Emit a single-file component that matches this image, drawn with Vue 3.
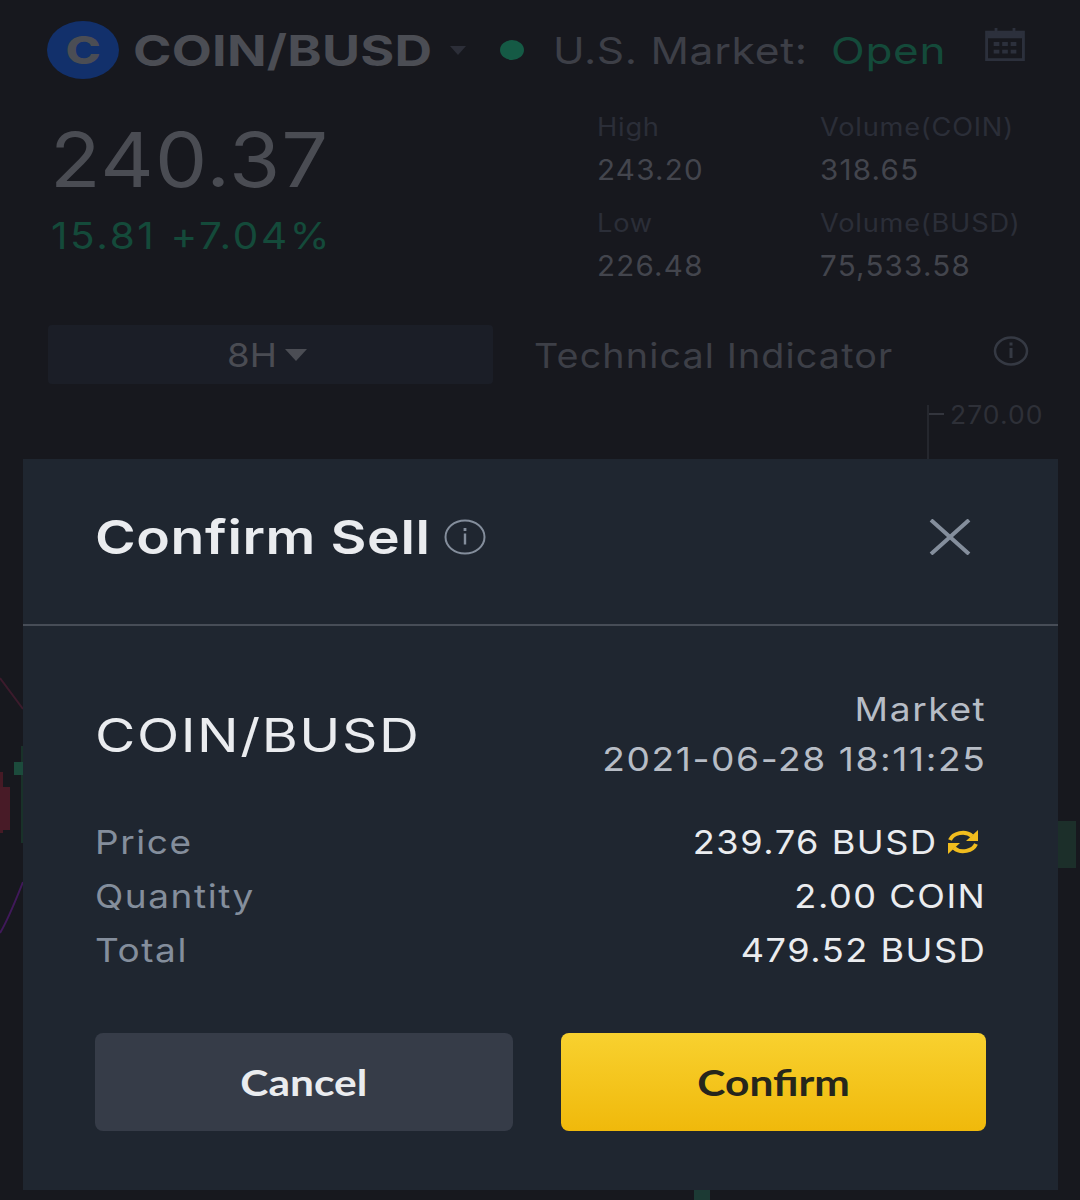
<script setup>
const stats = [
  { label: 'High', value: '243.20', key: 'Volume(COIN)', amount: '318.65' },
  { label: 'Low', value: '226.48', key: 'Volume(BUSD)', amount: '75,533.58' },
]
</script>

<template>
  <div class="page">
    <header class="top">
      <div class="logo"><span>C</span></div>
      <h1 class="pair">COIN/BUSD</h1>
      <i class="caret small"></i>
      <i class="dot"></i>
      <span class="market">U.S. Market:</span>
      <span class="open">Open</span>
      <svg class="cal" width="40" height="34" viewBox="0 0 42 36">
        <path d="M1.5 5.5h39v29h-39z" fill="none" stroke="#2c303c" stroke-width="3" />
        <path d="M2 6h38v6H2zM10 1h3v6h-3zM29 1h3v6h-3z" fill="#2c303c" />
        <path d="M9 16h6v4H9zM18 16h6v4h-6zM27 16h6v4h-6zM9 24h6v4H9zM18 24h6v4h-6zM27 24h6v4h-6z" fill="#2c303c" />
      </svg>
    </header>

    <section class="summary">
      <div class="price">
        <div class="last">240.37</div>
        <div class="change">15.81 +7.04%</div>
      </div>
      <div class="stats">
        <template v-for="s in stats" :key="s.label">
          <div class="stat">
            <div class="stat-label">{{ s.label }}</div>
            <div class="stat-value">{{ s.value }}</div>
          </div>
          <div class="stat">
            <div class="stat-label">{{ s.key }}</div>
            <div class="stat-value">{{ s.amount }}</div>
          </div>
        </template>
      </div>
    </section>

    <section class="tools">
      <div class="interval"><span>8H</span><i class="caret"></i></div>
      <span class="indicator">Technical Indicator</span>
      <svg class="tool-info" width="36" height="30" viewBox="0 0 36 30">
        <ellipse cx="18" cy="15" rx="16" ry="13.5" fill="none" stroke="#353943" stroke-width="2.5" />
        <path d="M16.5 6.5h3v3h-3zM16.5 12h3v10h-3z" fill="#353943" />
      </svg>
    </section>

    <div class="chart">
      <i class="axis"></i>
      <i class="tick"></i>
      <span class="axis-price">270.00</span>
      <svg class="lines" width="24" height="300" viewBox="0 0 24 300">
        <path d="M0 28L23 59" stroke="#3c1b2c" stroke-width="2" fill="none" />
        <path d="M0 283C8 270 15 252 23 232" stroke="#40195a" stroke-width="2" fill="none" />
        <path d="M21 96h2v97h-2z" fill="#193229" />
        <path d="M14 112h9v13h-9z" fill="#1c4b3c" />
        <path d="M0 122h3v61H0z" fill="#451a25" />
        <path d="M0 137h10v43H0z" fill="#481b27" />
      </svg>
      <i class="side-candle"></i>
      <i class="bottom-candle"></i>
    </div>

    <div class="modal">
      <div class="modal-head">
        <h2>Confirm Sell</h2>
        <svg class="head-info" width="42" height="36" viewBox="0 0 42 36">
          <ellipse cx="21" cy="18" rx="19.5" ry="16.5" fill="none" stroke="#848e9c" stroke-width="2" />
          <path d="M19.6 9h2.8v3h-2.8zM19.8 14.5h2.4v11h-2.4z" fill="#848e9c" />
        </svg>
        <svg class="close" width="42" height="36" viewBox="0 0 42 36">
          <path d="M2 1l38 34M40 1L2 35" stroke="#848e9c" stroke-width="4" fill="none" />
        </svg>
      </div>

      <div class="modal-body">
        <div class="order">
          <div class="order-pair">COIN/BUSD</div>
          <div class="order-meta">
            <div>Market</div>
            <div>2021-06-28 18:11:25</div>
          </div>
        </div>

        <div class="rows">
          <div class="row">
            <span class="row-key">Price</span>
            <span class="row-price">
              <span class="row-val">239.76 BUSD</span>
              <svg class="swap" width="32" height="26" viewBox="0 0 32 26">
                <path d="M3 11C6 4 18 1 25 7" stroke="#f0bc1e" stroke-width="4" fill="none" />
                <path d="M31 1v11H19z" fill="#f0bc1e" />
                <path d="M29 15C26 22 14 25 7 19" stroke="#f0bc1e" stroke-width="4" fill="none" />
                <path d="M1 25V14h12z" fill="#f0bc1e" />
              </svg>
            </span>
          </div>
          <div class="row">
            <span class="row-key">Quantity</span>
            <span class="row-val">2.00 COIN</span>
          </div>
          <div class="row">
            <span class="row-key">Total</span>
            <span class="row-val">479.52 BUSD</span>
          </div>
        </div>

        <div class="actions">
          <button class="cancel"><span>Cancel</span></button>
          <button class="confirm"><span>Confirm</span></button>
        </div>
      </div>
    </div>
  </div>
</template>

<style>
html,
body {
  margin: 0;
  background: #17181e;
}
</style>

<style scoped>
.page {
  position: relative;
  width: 1080px;
  height: 1200px;
  overflow: hidden;
  background: #17181e;
  font-family: Inter, "Open Sans", sans-serif;
}

.top {
  display: flex;
  align-items: center;
  height: 58px;
  padding: 21px 0 0 47px;
}

.logo {
  display: flex;
  align-items: center;
  justify-content: center;
  flex: none;
  width: 72px;
  height: 58px;
  border-radius: 50%;
  background: #12306b;
  color: #4b4d54;
  font: 800 38px/1 Inter, sans-serif;
}

.logo span {
  transform: scaleX(1.25);
}

.pair {
  margin: 0 0 0 14px;
  width: 299px;
  color: #4b4d54;
  font-size: 43px;
  font-weight: 700;
  letter-spacing: 0.2px;
  white-space: nowrap;
  transform: scaleX(1.21);
  transform-origin: left;
}

.caret {
  display: inline-block;
  flex: none;
  width: 0;
  height: 0;
  border-left: 11px solid transparent;
  border-right: 11px solid transparent;
  border-top: 12px solid #4b4d54;
}

.caret.small {
  margin-left: 18px;
  border-left-width: 8px;
  border-right-width: 8px;
  border-top: 9px solid #2c2e38;
}

.dot {
  flex: none;
  width: 24px;
  height: 20px;
  margin-left: 34px;
  border-radius: 50%;
  background: #155a45;
}

.market {
  flex: none;
  width: 254px;
  margin-left: 29px;
  color: #3d3f47;
  font-size: 37px;
  letter-spacing: 0.6px;
  white-space: nowrap;
  transform: scaleX(1.15);
  transform-origin: left;
}

.open {
  flex: none;
  width: 112px;
  margin-left: 24px;
  color: #144a3a;
  font-size: 37px;
  letter-spacing: 0.6px;
  transform: scaleX(1.19);
  transform-origin: left;
}

.cal {
  flex: none;
  margin: -12px 0 0 42px;
}

.summary {
  display: flex;
  height: 246px;
}

.price {
  width: 597px;
  padding: 38px 0 0 50px;
  box-sizing: border-box;
}

.last {
  color: #4a4c53;
  font-size: 75px;
  line-height: 86px;
  letter-spacing: 1px;
  transform: scaleX(1.105);
  transform-origin: left;
}

.change {
  margin-top: 10px;
  margin-left: 1px;
  color: #144a3a;
  font-size: 37px;
  line-height: 46px;
  letter-spacing: 2.4px;
  transform: scaleX(1.095);
  transform-origin: left;
}

.stats {
  display: grid;
  grid-template-columns: 223px 1fr;
  grid-auto-rows: 96px;
  padding-top: 33px;
}

.stat-label {
  color: #2b2e38;
  font-size: 25px;
  line-height: 30px;
  letter-spacing: 0.7px;
  transform: scaleX(1.09);
  transform-origin: left;
}

.stat-value {
  margin-top: 12px;
  color: #43454d;
  font-size: 29px;
  line-height: 32px;
  letter-spacing: 1.2px;
  transform: scaleX(1.02);
  transform-origin: left;
}

.tools {
  display: flex;
  align-items: center;
  padding-left: 48px;
}

.interval {
  display: flex;
  align-items: center;
  justify-content: center;
  box-sizing: border-box;
  width: 445px;
  height: 59px;
  padding-right: 7px;
  border-radius: 4px;
  background: #1b1e27;
  color: #4a4c53;
  font-size: 33px;
}

.interval span {
  margin-right: 14px;
  transform: scaleX(1.11);
  transform-origin: left;
}

.indicator {
  flex: none;
  width: 358px;
  margin: 2px 0 0 41px;
  color: #3d3f47;
  font-size: 34px;
  letter-spacing: 1px;
  white-space: nowrap;
  transform: scaleX(1.11);
  transform-origin: left;
}

.tool-info {
  flex: none;
  margin: -8px 0 0 101px;
}

.axis {
  position: absolute;
  left: 927px;
  top: 405px;
  width: 2px;
  height: 54px;
  background: #25272e;
}

.tick {
  position: absolute;
  left: 929px;
  top: 413px;
  width: 15px;
  height: 2px;
  background: #33353d;
}

.axis-price {
  position: absolute;
  left: 950px;
  top: 400px;
  color: #2e3038;
  font-size: 25px;
  letter-spacing: 1px;
  transform: scaleX(1.06);
  transform-origin: left;
}

.lines {
  position: absolute;
  left: 0;
  top: 650px;
}

.side-candle {
  position: absolute;
  left: 1058px;
  top: 821px;
  width: 18px;
  height: 47px;
  background: #1c2f2a;
}

.bottom-candle {
  position: absolute;
  left: 694px;
  top: 1190px;
  width: 16px;
  height: 10px;
  background: #1c3a34;
}

.modal {
  position: absolute;
  left: 23px;
  top: 459px;
  width: 1035px;
  height: 731px;
  background: #1f2630;
}

.modal-head {
  display: flex;
  align-items: center;
  box-sizing: border-box;
  height: 167px;
  padding: 0 87px 10px 72px;
  border-bottom: 2px solid #474d57;
}

.modal-head h2 {
  flex: none;
  width: 333px;
  margin: 0;
  color: #eaecef;
  font-size: 47px;
  font-weight: 600;
  letter-spacing: 0.5px;
  white-space: nowrap;
  transform: scaleX(1.177);
  transform-origin: left;
}

.head-info {
  margin-left: 16px;
}

.close {
  margin-left: auto;
}

.modal-body {
  padding: 0 72px;
}

.order {
  display: flex;
  align-items: center;
  justify-content: space-between;
  height: 168px;
  padding-top: 47px;
  box-sizing: border-box;
}

.order-pair {
  margin-top: 2px;
  color: #eaecef;
  font-size: 46px;
  letter-spacing: 1.3px;
  transform: scaleX(1.2);
  transform-origin: left;
}

.order-meta {
  color: #b7bdc6;
  font-size: 33px;
  line-height: 50px;
  letter-spacing: 1.4px;
  text-align: right;
  transform: scaleX(1.125);
  transform-origin: right;
}

.rows {
  margin-top: 21px;
}

.row {
  display: flex;
  justify-content: space-between;
  align-items: center;
  height: 54px;
  font-size: 33px;
  letter-spacing: 1.4px;
}

.row-key {
  color: #848e9c;
  transform: scaleX(1.12);
  transform-origin: left;
}

.row-val {
  color: #eaecef;
  transform: scaleX(1.095);
  transform-origin: right;
}

.row-price {
  display: flex;
  align-items: center;
}

.swap {
  margin: 0 7px 0 9px;
}

.actions {
  display: flex;
  justify-content: space-between;
  margin-top: 56px;
}

.actions button {
  height: 98px;
  padding: 0;
  border: 0;
  border-radius: 8px;
  font: 700 36px Lato, sans-serif;
}

.actions span {
  display: inline-block;
  transform: scaleX(1.18);
}

.cancel {
  width: 418px;
  background: #363c48;
  color: #eaecef;
}

.confirm {
  width: 425px;
  background: linear-gradient(#f8d12f, #f0b90b);
  color: #26261c;
}
</style>
